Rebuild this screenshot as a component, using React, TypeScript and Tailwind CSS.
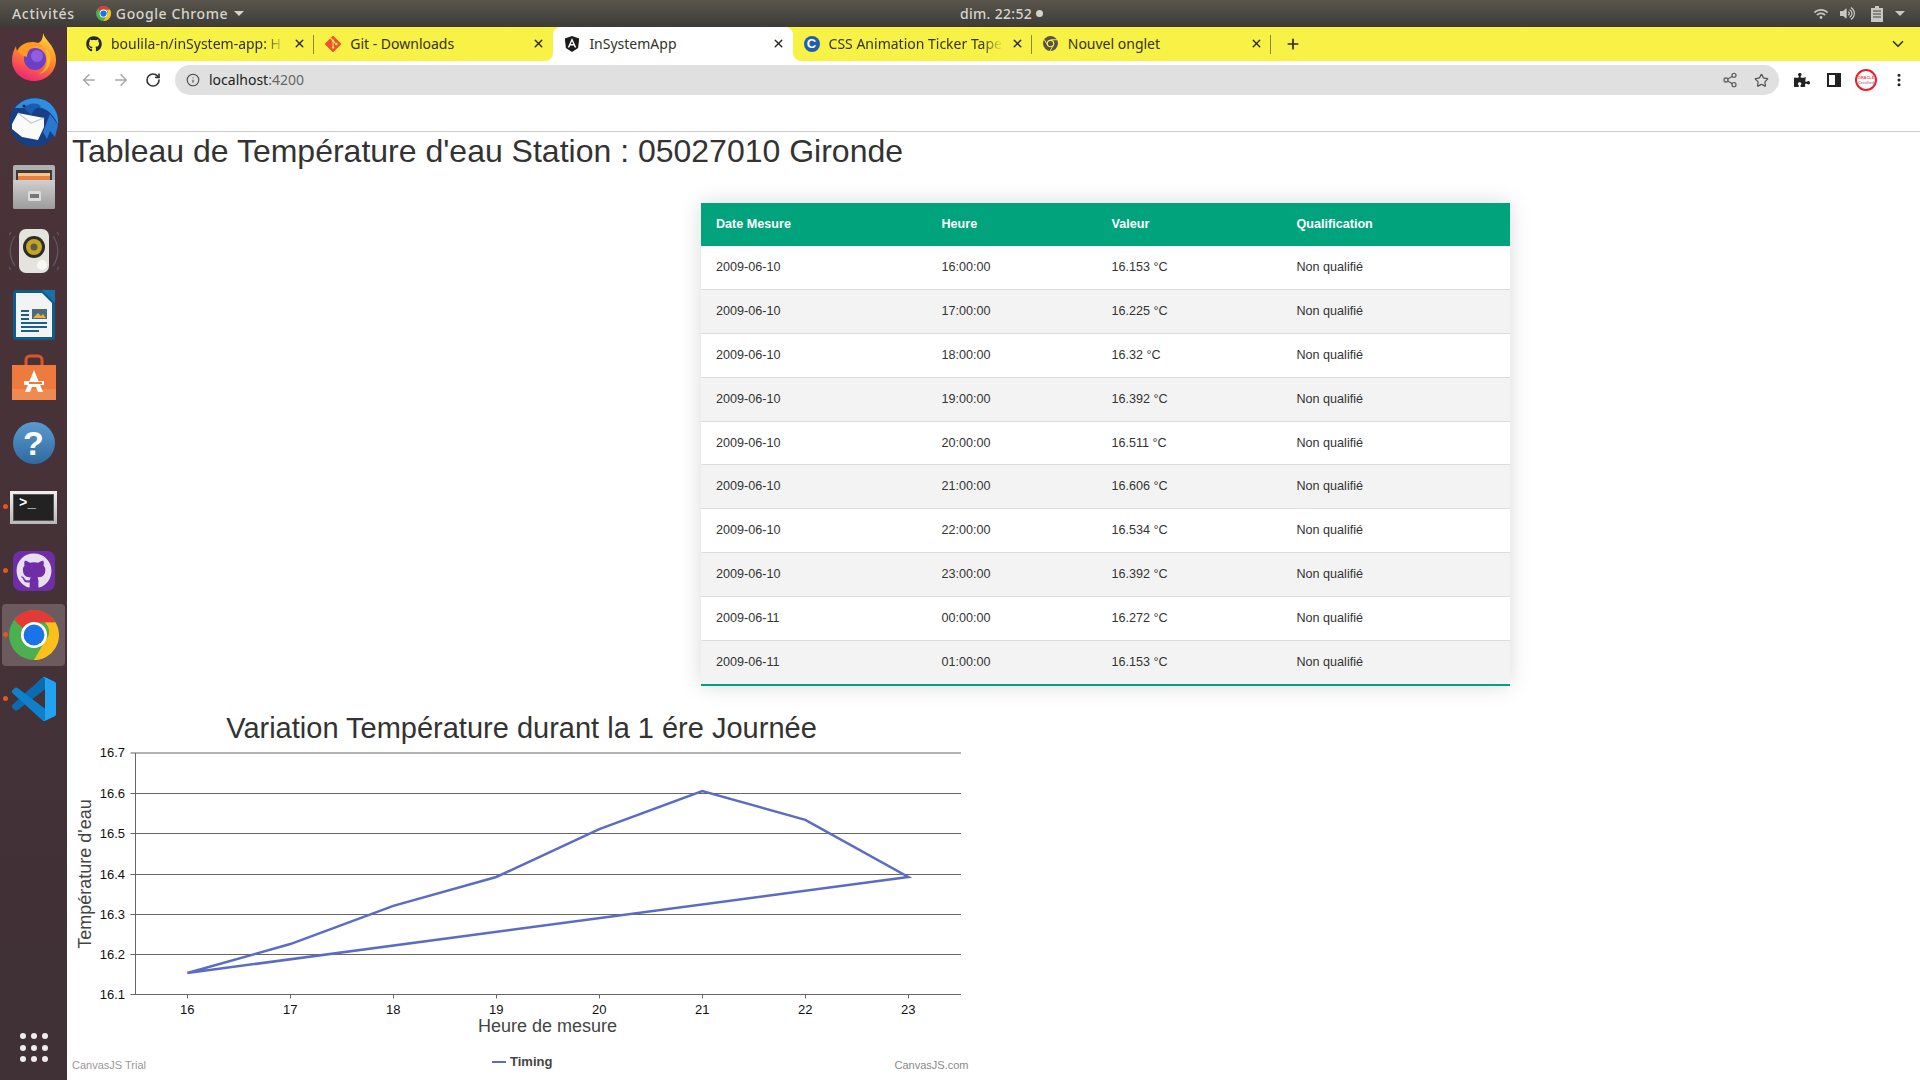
import { ArrowLeft, ArrowRight, ChevronDown, Info, MoreVertical, Plus, RotateCw, Share2, Star, X } from 'lucide-react';
import { FaGithub, FaPuzzlePiece, FaVolumeUp, FaWifi } from 'react-icons/fa';
import { SiGit } from 'react-icons/si';

const rows = [
  ['2009-06-10', '16:00:00', '16.153 °C'],
  ['2009-06-10', '17:00:00', '16.225 °C'],
  ['2009-06-10', '18:00:00', '16.32 °C'],
  ['2009-06-10', '19:00:00', '16.392 °C'],
  ['2009-06-10', '20:00:00', '16.511 °C'],
  ['2009-06-10', '21:00:00', '16.606 °C'],
  ['2009-06-10', '22:00:00', '16.534 °C'],
  ['2009-06-10', '23:00:00', '16.392 °C'],
  ['2009-06-11', '00:00:00', '16.272 °C'],
  ['2009-06-11', '01:00:00', '16.153 °C'],
];

const YELLOW = '#f8f246';

function ChromeLogo({ size }: { size: number }) {
  return (
    <svg width={size} height={size} viewBox="0 0 48 48">
      <circle cx="24" cy="24" r="24" fill="#4caf50" />
      <path d="M24 0a24 24 0 0 1 20.8 12H24a12 12 0 0 0-10.4 6L5.2 9.5A24 24 0 0 1 24 0z" fill="#e53935" />
      <path d="M44.8 12A24 24 0 0 1 24 48l10.4-18a12 12 0 0 0 0-18z" fill="#fdc01a" />
      <circle cx="24" cy="24" r="12.5" fill="#fff" />
      <circle cx="24" cy="24" r="10" fill="#1a73e8" />
    </svg>
  );
}

function Firefox() {
  return (
    <svg width="48" height="50" viewBox="0 0 48 50" className="-mt-[4px]">
      <defs>
        <linearGradient id="ffa" x1="0.7" y1="0" x2="0.3" y2="1">
          <stop offset="0" stopColor="#ffd83a" />
          <stop offset="0.45" stopColor="#ff8a2a" />
          <stop offset="1" stopColor="#f0207a" />
        </linearGradient>
      </defs>
      <path d="M33 1c1 4 5 8 8 12 3 5 5 9 5 15 0 12-10 21-22 21S2 40 2 28c0-6 2-10 4-14 0 3 1 5 2 6 2-4 5-6 9-7 6-2 13 0 15-6 1-2 1-5 1-6z" fill="url(#ffa)" />
      <circle cx="25" cy="27" r="11" fill="#6d3fc4" />
      <circle cx="27" cy="24" r="6" fill="#8f5fe0" />
      <path d="M7 19c3-6 9-9 15-9 6 0 9 2 11 6-4-2-8-2-11 0-3 1-5 5-5 9-3-1-7-2-10-6z" fill="#ff9a22" />
      <path d="M36 16c4 4 6 9 4 15-1 6-6 10-11 11 5-3 8-8 8-13 0-5-1-9-1-13z" fill="#ffb62f" />
    </svg>
  );
}

function Thunderbird() {
  return (
    <svg width="50" height="50" viewBox="0 0 50 50" className="-mt-[2px]">
      <circle cx="25" cy="25" r="24.5" fill="#163f86" />
      <path d="M6 11C13 1 28-2 39 5c7 5 11 13 10 23-3-8-8-14-16-17-6-2-13-2-18 0z" fill="#2f8ee0" />
      <path d="M15 11c4-5 12-6 17-2l-6 3-4 6z" fill="#1c5cb0" />
      <path d="M41 17l8 11-3 12-5-6-3 8-4-7z" fill="#2a78cc" />
      <path d="M3 27l6-11 26 5 0 9-6 13-16-3-10-8z" fill="#fafafa" />
      <path d="M9 16l13 10 13-5" fill="none" stroke="#c4c9d2" strokeWidth="1.2" />
      <circle cx="15" cy="9" r="1.6" fill="#0c2340" />
    </svg>
  );
}

function Cabinet() {
  return (
    <svg width="42" height="44" viewBox="0 0 42 44">
      <defs>
        <linearGradient id="cab" x1="0" y1="0" x2="0" y2="1">
          <stop offset="0" stopColor="#cfcfcf" />
          <stop offset="1" stopColor="#9c9c9c" />
        </linearGradient>
      </defs>
      <rect x="0" y="0" width="42" height="44" rx="2" fill="#b0b0b0" />
      <rect x="3" y="5" width="36" height="14" fill="#3a3a3a" />
      <rect x="5" y="8" width="32" height="3" fill="#f7c48c" />
      <rect x="5" y="11" width="32" height="6" fill="#e8803f" />
      <path d="M0 15h42v27a2 2 0 0 1-2 2H2a2 2 0 0 1-2-2z" fill="url(#cab)" />
      <rect x="15" y="26" width="13" height="10" rx="1.5" fill="#dcdcdc" />
      <rect x="17" y="29" width="9" height="4" fill="#777" />
    </svg>
  );
}

function Speaker() {
  return (
    <svg width="50" height="46" viewBox="0 0 50 46">
      <path d="M6 8a26 26 0 0 0 0 30M2 4a32 32 0 0 0 0 38M44 8a26 26 0 0 1 0 30M48 4a32 32 0 0 1 0 38" fill="none" stroke="#5f5a66" strokeWidth="1.2" />
      <rect x="10" y="1" width="30" height="44" rx="7" fill="#e4e4de" />
      <circle cx="25" cy="19" r="11" fill="#2e2c28" />
      <circle cx="25" cy="19" r="8" fill="#c5a520" />
      <circle cx="25" cy="19" r="3.5" fill="#5e5a50" />
      <circle cx="33" cy="37" r="5" fill="#f7f7f3" />
    </svg>
  );
}

function Writer() {
  return (
    <svg width="42" height="50" viewBox="0 0 42 50">
      <path d="M3 0h39v47a3 3 0 0 1-3 3H3a3 3 0 0 1-3-3V3a3 3 0 0 1 3-3z" fill="#0e5b8c" />
      <path d="M3 3h26l10 10v34H3z" fill="#f2f4f4" />
      <path d="M29 0l13 13V0z" fill="#1872a8" />
      <rect x="19" y="19" width="15" height="10" fill="#4d6a80" />
      <path d="M20 28l5-5 3 3 2-2 3 4z" fill="#f0b040" />
      <path d="M8 20h8v2H8zM8 24h8v2H8zM8 28h8v2H8zM8 32h26v2H8zM8 36h26v2H8zM8 40h18v2H8z" fill="#1d5f8a" />
    </svg>
  );
}

function Bag() {
  return (
    <svg width="44" height="46" viewBox="0 0 44 46" className="-mt-[4px]">
      <path d="M14 12V6a4 4 0 0 1 4-4h8a4 4 0 0 1 4 4v6" fill="none" stroke="#d8562a" strokeWidth="3" />
      <path d="M0 11h44v35H0z" fill="#ee7b3d" />
      <path d="M0 35h44v11H0z" fill="#f08a50" />
      <path d="M22 16l-9 22h5l2-5h4l2 5h5z" fill="#fff" />
      <rect x="12" y="27" width="20" height="4" fill="#fff" />
      <rect x="17" y="28" width="13" height="2" fill="#ee7b3d" />
    </svg>
  );
}

function Help() {
  return (
    <div className="flex h-[42px] w-[42px] items-center justify-center rounded-full bg-gradient-to-b from-[#5b9bd2] to-[#2f6a9f] font-['Liberation_Sans',sans-serif] text-[34px] font-bold leading-none text-white">
      ?
    </div>
  );
}

function Terminal() {
  return (
    <div className="h-[33px] w-[47px] bg-gradient-to-b from-[#f0f0f0] to-[#b8b8b8] p-[3px]">
      <div className="h-full w-full border border-[#555] bg-[#222] px-[5px] font-['Liberation_Mono',monospace] text-[14px] font-bold leading-[17px] text-white">
        &gt;_
      </div>
    </div>
  );
}

function VsCode() {
  return (
    <svg width="44" height="44" viewBox="0 0 100 100">
      <path
        fillRule="evenodd"
        d="M70.9119 99.3171C72.4869 99.9307 74.2828 99.8914 75.8725 99.1264L96.4608 89.2197C98.6242 88.1787 100 85.9892 100 83.5872V16.4133C100 14.0113 98.6243 11.8218 96.4609 10.7808L75.8725 0.873756C73.7862 -0.130129 71.3446 0.11576 69.5135 1.44695C69.252 1.63711 69.0028 1.84943 68.769 2.08341L29.3551 38.0415L12.1872 25.0096C10.589 23.7965 8.35363 23.8959 6.86933 25.2461L1.36303 30.2549C-0.452552 31.9064 -0.454633 34.7627 1.35853 36.417L16.2471 50.0001L1.35853 63.5832C-0.454633 65.2374 -0.452552 68.0938 1.36303 69.7453L6.86933 74.7541C8.35363 76.1043 10.589 76.2037 12.1872 74.9905L29.3551 61.9587L68.769 97.9167C69.3925 98.5406 70.1246 99.0104 70.9119 99.3171ZM75.0152 27.2989L45.1091 50.0001L75.0152 72.7012V27.2989Z"
        fill="#0f85d4"
      />
      <path d="M96.4614 10.7962L75.8569 0.875542C73.4719 -0.272773 70.6217 0.211611 68.75 2.08333L1.29858 63.5832C-0.515693 65.2373 -0.513607 68.0937 1.30308 69.7452L6.81272 74.754C8.29793 76.1042 10.5347 76.2036 12.1338 74.9905L93.3609 13.3699C96.086 11.3026 100 13.2462 100 16.6667V16.4275C100 14.0265 98.6246 11.8378 96.4614 10.7962Z" fill="#0a6cb0" />
      <path d="M96.4614 89.2038L75.8569 99.1245C73.4719 100.273 70.6217 99.7884 68.75 97.9167L1.29858 36.4168C-0.515693 34.7627 -0.513607 31.9063 1.30308 30.2548L6.81272 25.246C8.29793 23.8958 10.5347 23.7964 12.1338 25.0095L93.3609 86.6301C96.086 88.6974 100 86.7538 100 83.3333V83.5725C100 85.9735 98.6246 88.1622 96.4614 89.2038Z" fill="#0f80cc" />
      <path d="M75.8578 99.1263C73.4721 100.274 70.6219 99.7885 68.75 97.9166C71.0564 100.223 75 98.5895 75 95.3278V4.67213C75 1.41039 71.0564 -0.223106 68.75 2.08329C70.6219 0.211402 73.4721 -0.273666 75.8578 0.873633L96.4587 10.7807C98.6234 11.8217 100 14.0112 100 16.4132V83.5871C100 85.9891 98.6234 88.1786 96.4586 89.2196L75.8578 99.1263Z" fill="#22a3f2" />
    </svg>
  );
}

const dock = [
  { key: 'firefox', icon: <Firefox /> },
  { key: 'thunderbird', icon: <Thunderbird /> },
  { key: 'files', icon: <Cabinet /> },
  { key: 'rhythmbox', icon: <Speaker /> },
  { key: 'writer', icon: <Writer /> },
  { key: 'software', icon: <Bag /> },
  { key: 'help', icon: <Help /> },
  { key: 'terminal', icon: <Terminal />, running: true },
  {
    key: 'github',
    running: true,
    icon: (
      <div className="flex h-[40px] w-[42px] items-center justify-center rounded-lg bg-[#6f2da8]">
        <FaGithub size={36} color="#e8e0f0" />
      </div>
    ),
  },
  { key: 'chrome', icon: <ChromeLogo size={50} />, running: true, active: true },
  { key: 'vscode', icon: <VsCode />, running: true },
];

function Dock() {
  return (
    <aside className="flex w-[67px] shrink-0 flex-col bg-gradient-to-b from-[#4b3339] to-[#3f3136]">
      <div className="flex flex-1 flex-col">
        {dock.map((item) => (
          <div key={item.key} className="relative flex h-[64px] items-center justify-center">
            {item.active && <div className="absolute inset-x-[2px] inset-y-[1px] rounded bg-[#6b5a5e]" />}
            {item.running && <div className="absolute left-[3px] top-[29px] h-[5px] w-[5px] rounded-full bg-[#e95420]" />}
            <div className="relative flex items-center justify-center">{item.icon}</div>
          </div>
        ))}
      </div>
      <div className="mb-[18px] grid grid-cols-3 justify-items-center gap-x-[5px] gap-y-[5.5px] self-center">
        {Array.from({ length: 9 }).map((_, i) => (
          <div key={i} className="h-[6px] w-[6px] rounded-full bg-[#eeeeee]" />
        ))}
      </div>
    </aside>
  );
}

function TopBar() {
  return (
    <header className="relative flex h-[27px] shrink-0 items-center bg-gradient-to-b from-[#5a564d] to-[#3c3b37] font-['Noto_Sans',sans-serif] text-[14px] font-medium text-[#d6d3ca]">
      <span className="ml-[12px] tracking-[0.7px]">Activités</span>
      <div className="ml-[21px] flex items-center gap-[5px]">
        <ChromeLogo size={15} />
        <span className="tracking-[0.6px]">Google Chrome</span>
        <div className="ml-[1px] h-0 w-0 border-x-[5px] border-t-[5px] border-x-transparent border-t-[#d6d3ca]" />
      </div>
      <div className="absolute left-[960px] flex items-center gap-[4px]">
        <span className="tracking-[0.3px]">dim. 22:52</span>
        <div className="h-[7px] w-[7px] rounded-full bg-[#d6d3ca]" />
      </div>
      <div className="ml-auto flex items-center text-[#c9c7bf]">
        <FaWifi size={14} className="mr-[12px]" />
        <FaVolumeUp size={15} className="mr-[16px]" />
        <svg width="12" height="16" viewBox="0 0 12 16" className="mr-[12px]">
          <path d="M4 0h4v2h4v14H0V2h4z" fill="currentColor" />
          <path d="M2 5h8M2 8h8M2 11h8" stroke="#45433e" strokeWidth="1" />
        </svg>
        <div className="mr-[15px] h-0 w-0 border-x-[5px] border-t-[5px] border-x-transparent border-t-[#c9c7bf]" />
      </div>
    </header>
  );
}

function CssIcon() {
  return (
    <div className="flex h-[16px] w-[16px] items-center justify-center rounded-full bg-[#1f5fb0] font-['Liberation_Sans',sans-serif] text-[13px] font-bold leading-none text-white">
      C
    </div>
  );
}

function GreyChrome() {
  return (
    <svg width="15" height="15" viewBox="0 0 16 16">
      <circle cx="8" cy="8" r="8" fill="#55534a" />
      <circle cx="8" cy="8" r="4" fill={YELLOW} />
      <circle cx="8" cy="8" r="2.8" fill="#55534a" />
      <path d="M8 4h7M5 10L1.5 4M11 10l-3.5 6" stroke={YELLOW} strokeWidth="1" />
    </svg>
  );
}

function AngularIcon() {
  return (
    <svg width="16" height="16" viewBox="0 0 16 16">
      <path d="M8 0l7.2 2.6-1.1 9.5L8 16l-6.1-3.9L.8 2.6z" fill="#1c1c1c" />
      <path fillRule="evenodd" d="M8 2L3.7 11.6h1.6l.9-2.1h3.6l.9 2.1h1.6zM6.8 8.1L8 5.3l1.2 2.8z" fill="#fff" />
    </svg>
  );
}

function Tab({ icon, title, active, sep, fade }: { icon: React.ReactNode; title: string; active?: boolean; sep?: boolean; fade?: boolean }) {
  return (
    <div className={`relative flex h-full w-[239.2px] shrink-0 items-center pb-[1px] pl-[11px] pr-[8px] ${active ? 'rounded-t-lg bg-white' : ''}`}>
      {active && (
        <div className="absolute -left-[8px] bottom-0 h-[8px] w-[8px] bg-white">
          <div className="h-full w-full rounded-br-lg bg-[#f8f246]" />
        </div>
      )}
      {active && (
        <div className="absolute -right-[8px] bottom-0 h-[8px] w-[8px] bg-white">
          <div className="h-full w-full rounded-bl-lg bg-[#f8f246]" />
        </div>
      )}
      <div className="flex h-[16px] w-[16px] shrink-0 items-center justify-center">{icon}</div>
      <span
        className={`ml-[9px] min-w-0 flex-1 whitespace-nowrap text-[14px] text-[#333326] ${fade ? '[mask-image:linear-gradient(to_right,black_88%,transparent_100%)]' : ''}`}
      >
        {title}
      </span>
      <X size={13} strokeWidth={2.6} className="ml-[8px] shrink-0 text-[#2a2a22]" />
      {sep && <div className="absolute right-0 top-[8px] h-[19px] w-px bg-[#8c8838]" />}
    </div>
  );
}

function TabStrip() {
  return (
    <div className="flex h-[34px] shrink-0 items-center bg-[#f8f246] pl-[8px] font-['Noto_Sans',sans-serif]">
      <Tab icon={<FaGithub size={16} color="#24292e" />} title="boulila-n/inSystem-app: H" sep fade />
      <Tab icon={<SiGit size={16} color="#f05133" />} title="Git - Downloads" />
      <Tab icon={<AngularIcon />} title="InSystemApp" active />
      <Tab icon={<CssIcon />} title="CSS Animation Ticker Tape" sep fade />
      <Tab icon={<GreyChrome />} title="Nouvel onglet" sep />
      <Plus size={16} strokeWidth={2.6} className="ml-[14px] text-[#2a2a22]" />
      <ChevronDown size={18} strokeWidth={2.2} className="ml-auto mr-[13px] text-[#33332a]" />
    </div>
  );
}

function ToolButton({ children }: { children: React.ReactNode }) {
  return <div className="flex h-[30px] w-[32px] shrink-0 items-center justify-center">{children}</div>;
}

function Toolbar() {
  return (
    <div className="flex h-[42px] shrink-0 items-start bg-white pl-[6px] pr-[5px] pt-[4px] font-['Noto_Sans',sans-serif]">
      <ToolButton><ArrowLeft size={18} strokeWidth={2} className="text-[#a8a8a8]" /></ToolButton>
      <ToolButton><ArrowRight size={18} strokeWidth={2} className="text-[#a8a8a8]" /></ToolButton>
      <ToolButton><RotateCw size={16} strokeWidth={2.4} className="text-[#333]" /></ToolButton>
      <div className="ml-[6px] mr-[7px] flex h-[30px] flex-1 items-center rounded-full bg-[#e0e0e0] pl-[10px] pr-[2px]">
        <Info size={14} strokeWidth={1.8} className="mx-[1px] text-[#444]" />
        <span className="mb-[1px] ml-[8px] text-[14px] text-[#222]">
          localhost<span className="text-[#666]">:4200</span>
        </span>
        <div className="ml-auto flex items-center">
          <ToolButton><Share2 size={16} strokeWidth={2} className="ml-[2px] text-[#666]" /></ToolButton>
          <ToolButton><Star size={15} strokeWidth={2} className="text-[#555]" /></ToolButton>
        </div>
      </div>
      <ToolButton><FaPuzzlePiece size={16} color="#222" /></ToolButton>
      <ToolButton>
        <div className="flex h-[14px] w-[14px] border-2 border-[#222] bg-[#222]">
          <div className="w-[6px] bg-white" />
        </div>
      </ToolButton>
      <ToolButton>
        <div className="flex h-[22px] w-[22px] flex-col items-center justify-center rounded-full border-2 border-[#e8202a] bg-white font-['Liberation_Sans',sans-serif] text-[4px] font-bold leading-[5px] text-[#e8505a]">
          <span>ORACLE</span>
          <span className="text-[#999]">Certified</span>
        </div>
      </ToolButton>
      <div className="ml-[1px]">
        <ToolButton><MoreVertical size={16} strokeWidth={2.6} className="text-[#222]" /></ToolButton>
      </div>
    </div>
  );
}

function TemperatureTable() {
  return (
    <table className="ml-[634px] mt-[33px] w-[809px] table-fixed border-collapse font-['Liberation_Sans',sans-serif] text-[12.6px] leading-[18.9px] text-[#333333] shadow-[0_0_20px_rgba(0,0,0,0.15)]">
      <colgroup>
        <col className="w-[225.5px]" />
        <col className="w-[170px]" />
        <col className="w-[185px]" />
        <col className="w-[228.5px]" />
      </colgroup>
      <thead>
        <tr className="bg-[#00a37b] text-left text-white">
          <th className="px-[15px] py-[12px] font-bold">Date Mesure</th>
          <th className="px-[15px] py-[12px] font-bold">Heure</th>
          <th className="px-[15px] py-[12px] font-bold">Valeur</th>
          <th className="px-[15px] py-[12px] font-bold">Qualification</th>
        </tr>
      </thead>
      <tbody>
        {rows.map((row, i) => (
          <tr
            key={i}
            className={`border-b ${i % 2 === 1 ? 'bg-[#f3f3f3]' : 'bg-white'} ${i === rows.length - 1 ? 'border-b-2 border-[#00a37b]' : 'border-[#dddddd]'}`}
          >
            <td className="px-[15px] py-[12px]">{row[0]}</td>
            <td className="px-[15px] py-[12px]">{row[1]}</td>
            <td className="px-[15px] py-[12px]">{row[2]}</td>
            <td className="px-[15px] py-[12px]">Non qualifié</td>
          </tr>
        ))}
      </tbody>
    </table>
  );
}

const chartValues = [16.153, 16.225, 16.32, 16.392, 16.511, 16.606, 16.534, 16.392, 16.153];
const hours = [16, 17, 18, 19, 20, 21, 22, 23];
const gridY = [53, 93.5, 133.5, 174.5, 214.5, 254.5, 294.5];
const yLabels = ['16.7', '16.6', '16.5', '16.4', '16.3', '16.2', '16.1'];

function Chart() {
  const xOf = (i: number) => 120.3 + i * 103;
  const yOf = (v: number) => 273 - (v - 16.153) * 401.8;
  const closing = [...hours.map((_, i) => xOf(i)), xOf(0)];
  const points = chartValues.map((v, i) => `${closing[i]},${yOf(v)}`).join(' ');

  return (
    <div className="mt-[14px]">
      <svg width="903" height="380" viewBox="0 0 903 380" className="block font-['Liberation_Sans',sans-serif]">
        <text x="454.5" y="38" textAnchor="middle" fontSize="29" fill="#333">Variation Température durant la 1 ére Journée</text>
        {gridY.map((y, i) => (
          <g key={y}>
            <line x1="63.5" x2="894" y1={y} y2={y} stroke="#666" strokeWidth="1" />
            <text x="58" y={y + 4} textAnchor="end" fontSize="13" fill="#111">{yLabels[i]}</text>
          </g>
        ))}
        <line x1="68.5" x2="68.5" y1="53" y2="294.5" stroke="#666" strokeWidth="1" />
        {hours.map((h, i) => (
          <g key={h}>
            <line x1={Math.round(xOf(i)) + 0.5} x2={Math.round(xOf(i)) + 0.5} y1="294.5" y2="298.5" stroke="#666" strokeWidth="1" />
            <text x={xOf(i)} y="314" textAnchor="middle" fontSize="13" fill="#111">{h}</text>
          </g>
        ))}
        <polyline points={points} fill="none" stroke="#5a6cc4" strokeWidth="2.5" />
        <text x="480.5" y="332" textAnchor="middle" fontSize="18" fill="#444">Heure de mesure</text>
        <text transform="translate(24 174) rotate(-90)" x="0" y="0" textAnchor="middle" fontSize="18" fill="#444">Température d'eau</text>
        <line x1="425" x2="439" y1="362" y2="362" stroke="#5a6cc4" strokeWidth="2" />
        <text x="443" y="366" fontSize="13" fontWeight="700" fill="#444">Timing</text>
        <text x="5" y="369" fontSize="11" fill="#999">CanvasJS Trial</text>
        <text x="901.5" y="369" textAnchor="end" fontSize="11" fill="#888">CanvasJS.com</text>
      </svg>
    </div>
  );
}

export default function App() {
  return (
    <div className="flex h-screen w-screen flex-col overflow-hidden bg-white">
      <TopBar />
      <div className="flex min-h-0 flex-1">
        <Dock />
        <div className="flex min-w-0 flex-1 flex-col">
          <TabStrip />
          <Toolbar />
          <main className="min-h-0 flex-1 overflow-hidden">
            <div className="h-[29px] border-b border-[#cccccc]" />
            <h1 className="ml-[5px] font-['Liberation_Sans',sans-serif] text-[32px] font-normal leading-[38px] text-[#333]">
              Tableau de Température d'eau Station : 05027010 Gironde
            </h1>
            <TemperatureTable />
            <Chart />
          </main>
        </div>
      </div>
    </div>
  );
}
